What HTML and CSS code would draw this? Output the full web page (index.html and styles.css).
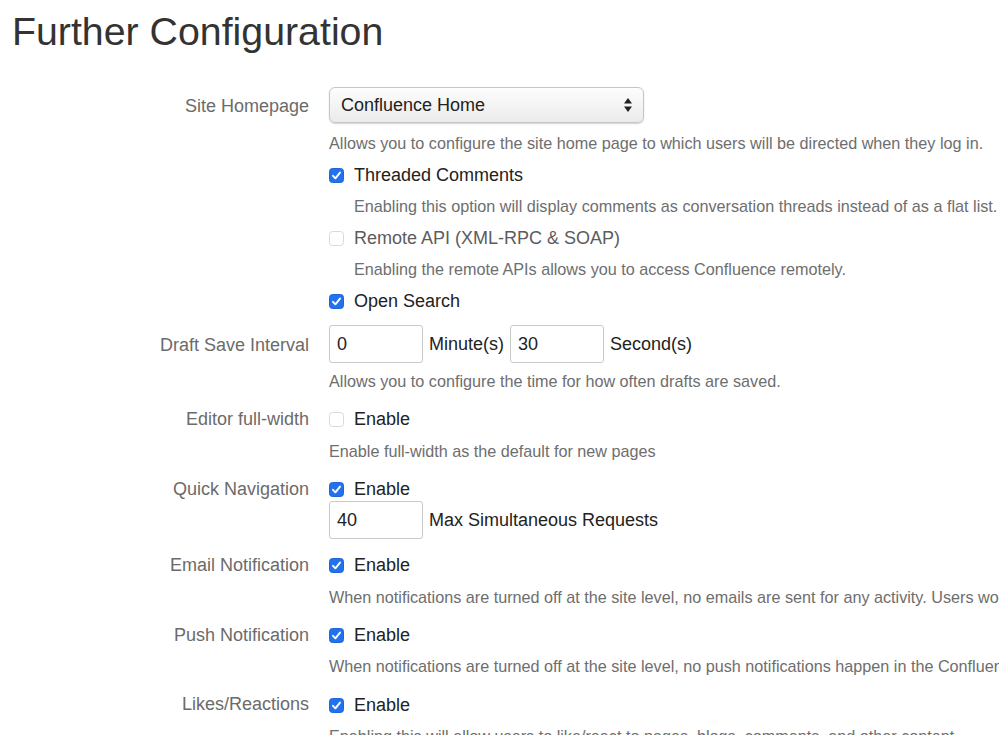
FILE: index.html
```html
<!DOCTYPE html>
<html lang="en">
<head>
<meta charset="utf-8">
<title>Further Configuration</title>
<link rel="stylesheet" href="styles.css">
</head>
<body>
<div class="page">
  <h1 class="title">Further Configuration</h1>
  <div class="form">
    <div class="row">
      <div class="label label-tall">Site Homepage</div>
      <div class="field">
        <div class="select-line">
          <div class="select">
            <span class="select-text">Confluence Home</span>
            <svg class="select-arrows" width="10" height="16" viewBox="0 0 10 16"><path d="M5 1 L9 6.5 H1 Z" fill="#222"/><path d="M5 15 L9 9.5 H1 Z" fill="#222"/></svg>
          </div>
        </div>
        <div class="desc">Allows you to configure the site home page to which users will be directed when they log in.</div>
        <div class="check-line">
          <span class="cb cb-on"><svg width="11" height="11" viewBox="0 0 11 11"><path d="M2 5.8 L4.4 8.3 L9 2.6" fill="none" stroke="#fff" stroke-width="1.9" stroke-linecap="round" stroke-linejoin="round"/></svg></span>
          <span class="check-text">Threaded Comments</span>
        </div>
        <div class="desc desc-indent">Enabling this option will display comments as conversation threads instead of as a flat list.</div>
        <div class="check-line">
          <span class="cb cb-off"></span>
          <span class="check-text check-muted">Remote API (XML-RPC &amp; SOAP)</span>
        </div>
        <div class="desc desc-indent">Enabling the remote APIs allows you to access Confluence remotely.</div>
        <div class="check-line">
          <span class="cb cb-on"><svg width="11" height="11" viewBox="0 0 11 11"><path d="M2 5.8 L4.4 8.3 L9 2.6" fill="none" stroke="#fff" stroke-width="1.9" stroke-linecap="round" stroke-linejoin="round"/></svg></span>
          <span class="check-text">Open Search</span>
        </div>
      </div>
    </div>

    <div class="row">
      <div class="label label-input">Draft Save Interval</div>
      <div class="field">
        <div class="input-line">
          <div class="input">0</div>
          <span class="unit">Minute(s)</span>
          <div class="input">30</div>
          <span class="unit">Second(s)</span>
        </div>
        <div class="desc">Allows you to configure the time for how often drafts are saved.</div>
      </div>
    </div>

    <div class="row">
      <div class="label">Editor full-width</div>
      <div class="field">
        <div class="check-line">
          <span class="cb cb-off"></span>
          <span class="check-text">Enable</span>
        </div>
        <div class="desc">Enable full-width as the default for new pages</div>
      </div>
    </div>

    <div class="row">
      <div class="label">Quick Navigation</div>
      <div class="field">
        <div class="check-line">
          <span class="cb cb-on"><svg width="11" height="11" viewBox="0 0 11 11"><path d="M2 5.8 L4.4 8.3 L9 2.6" fill="none" stroke="#fff" stroke-width="1.9" stroke-linecap="round" stroke-linejoin="round"/></svg></span>
          <span class="check-text">Enable</span>
        </div>
        <div class="input-line input-line-sub">
          <div class="input">40</div>
          <span class="unit">Max Simultaneous Requests</span>
        </div>
      </div>
    </div>

    <div class="row">
      <div class="label">Email Notification</div>
      <div class="field">
        <div class="check-line">
          <span class="cb cb-on"><svg width="11" height="11" viewBox="0 0 11 11"><path d="M2 5.8 L4.4 8.3 L9 2.6" fill="none" stroke="#fff" stroke-width="1.9" stroke-linecap="round" stroke-linejoin="round"/></svg></span>
          <span class="check-text">Enable</span>
        </div>
        <div class="desc">When notifications are turned off at the site level, no emails are sent for any activity. Users won't be able to change this in their profile settings.</div>
      </div>
    </div>

    <div class="row">
      <div class="label">Push Notification</div>
      <div class="field">
        <div class="check-line">
          <span class="cb cb-on"><svg width="11" height="11" viewBox="0 0 11 11"><path d="M2 5.8 L4.4 8.3 L9 2.6" fill="none" stroke="#fff" stroke-width="1.9" stroke-linecap="round" stroke-linejoin="round"/></svg></span>
          <span class="check-text">Enable</span>
        </div>
        <div class="desc">When notifications are turned off at the site level, no push notifications happen in the Confluence mobile app for any activity.</div>
      </div>
    </div>

    <div class="row">
      <div class="label">Likes/Reactions</div>
      <div class="field">
        <div class="check-line">
          <span class="cb cb-on"><svg width="11" height="11" viewBox="0 0 11 11"><path d="M2 5.8 L4.4 8.3 L9 2.6" fill="none" stroke="#fff" stroke-width="1.9" stroke-linecap="round" stroke-linejoin="round"/></svg></span>
          <span class="check-text">Enable</span>
        </div>
        <div class="desc">Enabling this will allow users to like/react to pages, blogs, comments, and other content.</div>
      </div>
    </div>
  </div>
</div>
</body>
</html>
```

FILE: styles.css
```css
html, body {
  margin: 0;
  padding: 0;
  background: #ffffff;
  overflow: hidden;
}

body {
  font-family: "Liberation Sans", Arial, Helvetica, sans-serif;
  color: #333333;
}

.page {
  width: 999px;
  height: 735px;
  overflow: hidden;
}

.title {
  margin: 0;
  padding: 8px 0 0 12px;
  font-size: 39.3px;
  font-weight: normal;
  line-height: 46px;
  color: #333333;
}

.form {
  margin-top: 32px;
  display: flex;
  flex-direction: column;
  gap: 6.5px;
}

.row {
  display: grid;
  grid-template-columns: 309px 1fr;
  column-gap: 20px;
}

.label {
  text-align: right;
  font-size: 18px;
  line-height: 29.6px;
  padding-top: 2px;
  color: #6b6b6b;
  white-space: nowrap;
}

.label-tall {
  line-height: 40px;
  padding-top: 0;
}

.label-input {
  line-height: 40px;
  padding-top: 2px;
}

.field {
  display: flex;
  flex-direction: column;
  min-width: 0;
}

.select-line {
  height: 41px;
  padding-top: 1px;
  box-sizing: border-box;
}

.select {
  width: 315px;
  height: 36px;
  box-sizing: border-box;
  border: 1px solid #c6c6c6;
  border-radius: 6px;
  background: linear-gradient(#fdfdfd, #ebebeb);
  box-shadow: 0 1px 1.5px rgba(0, 0, 0, 0.18);
  display: flex;
  align-items: center;
  justify-content: space-between;
  padding: 0 10px 0 11px;
}

.select-text {
  font-size: 18px;
  color: #222222;
}

.select-arrows {
  display: block;
}

.desc {
  font-size: 16.2px;
  line-height: 29.6px;
  padding-top: 2px;
  color: #6e6e6e;
  white-space: nowrap;
}

.desc-indent {
  padding-left: 25px;
}

.check-line {
  display: flex;
  align-items: center;
  height: 31.6px;
  padding-top: 2px;
  box-sizing: border-box;
  white-space: nowrap;
}

.cb {
  width: 15px;
  height: 15px;
  box-sizing: border-box;
  border-radius: 3.5px;
  margin-right: 10px;
  flex: none;
  display: flex;
  align-items: center;
  justify-content: center;
}

.cb-on {
  background: #2271ee;
  border: 1px solid #1c66dd;
}

.cb-off {
  background: #ffffff;
  border: 1px solid #d9d9d9;
}

.check-text {
  font-size: 18px;
  color: #222222;
}

.check-muted {
  color: #5c5c5c;
}

.input-line {
  display: flex;
  align-items: flex-start;
  gap: 6px;
  height: 42px;
  padding-top: 2px;
  box-sizing: border-box;
  white-space: nowrap;
}

.input-line-sub {
  margin-top: -3px;
  padding-top: 0;
  height: 41px;
}

.input {
  width: 94px;
  height: 38px;
  box-sizing: border-box;
  border: 1px solid #c9c9c9;
  border-radius: 3px;
  background: #ffffff;
  font-size: 18px;
  line-height: 36px;
  padding-left: 7px;
  color: #222222;
}

.unit {
  font-size: 18px;
  line-height: 38px;
  color: #222222;
}
```
